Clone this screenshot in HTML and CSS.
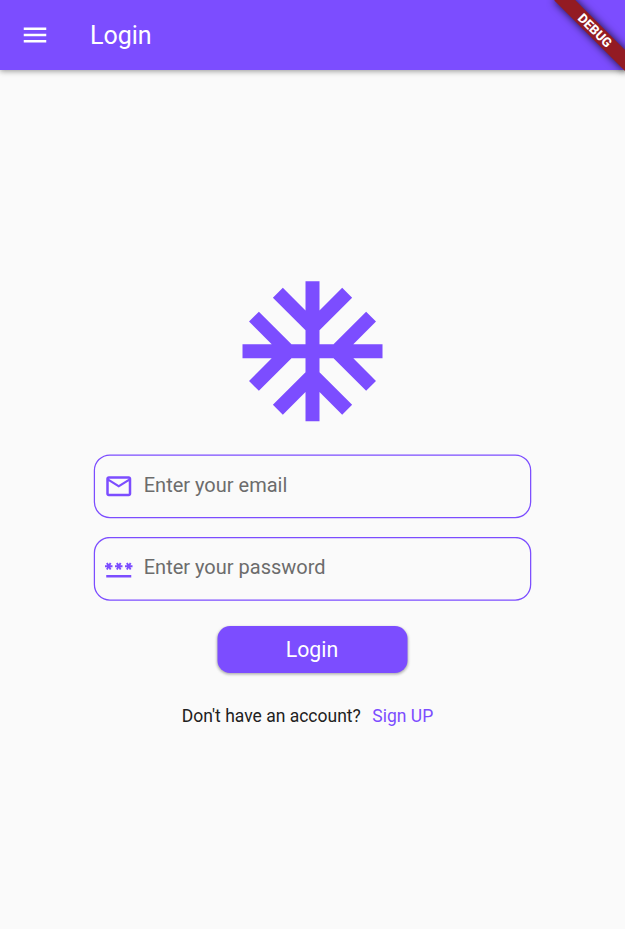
FILE: index.html
```html
<!DOCTYPE html>
<html lang="en">
<head>
  <meta charset="utf-8">
  <title>Login</title>
  <link rel="stylesheet" href="styles.css">
</head>
<body>
  <header class="app-bar">
    <svg class="menu-icon" viewBox="0 0 24 24"><path d="M3 18h18v-2H3v2zm0-5h18v-2H3v2zm0-7v2h18V6H3z"/></svg>
    <h1 class="title">Login</h1>
  </header>
  <div class="banner-clip"><div class="banner">DEBUG</div></div>
  <main class="content">
    <svg class="logo" viewBox="0.07 -0.035 24 24"><path d="M22 11h-4.170l3.240-3.240-1.410-1.420L15 11h-2V9l4.660-4.660-1.420-1.410L13 6.170V2h-2v4.170L7.760 2.930 6.340 4.340 11 9v2H9L4.340 6.340 2.930 7.760 6.170 11H2v2h4.170l-3.240 3.240 1.410 1.420L9 13h2v2l-4.660 4.660 1.420 1.410L11 17.830V22h2v-4.170l3.240 3.240 1.420-1.410L13 15v-2h2l4.660 4.660 1.410-1.420L17.830 13H22z"/></svg>
    <div class="field">
      <svg class="outline"><rect x="1.4" y="1" width="436.25" height="62.5" rx="15.5"/></svg>
      <svg class="field-icon" viewBox="0.2 0.6 24 24"><path d="M22 6c0-1.100-.9-2-2-2H4c-1.100 0-2 .9-2 2v12c0 1.100.9 2 2 2h16c1.100 0 2-.9 2-2V6zm-2 0l-8 5-8-5h16zm0 12H4V8l8 5 8-5v10z"/></svg>
      <span class="hint">Enter your email</span>
    </div>
    <div class="field">
      <svg class="outline"><rect x="1.4" y="0.5" width="436.25" height="62.5" rx="15.5"/></svg>
      <svg class="field-icon" viewBox="0.2 0.2 24 24"><path d="M2 17h20v2H2v-2zm1.150-4.050L4 11.470l.85 1.480 1.300-.75-.85-1.480H7v-1.500H5.300l.85-1.470L4.850 7 4 8.470 3.150 7l-1.300.75.85 1.470H1v1.500h1.700l-.85 1.480 1.300.75zm6.700-.75l1.300.75.85-1.480.85 1.480 1.300-.75-.85-1.480H15v-1.500h-1.700l.85-1.470-1.300-.75L12 8.470 11.150 7l-1.300.75.85 1.470H9v1.500h1.700l-.85 1.480zM23 9.220h-1.700l.85-1.470-1.300-.75L20 8.470 19.150 7l-1.300.75.85 1.470H17v1.500h1.700l-.85 1.480 1.300.75.85-1.480.85 1.480 1.300-.75-.85-1.480H23v-1.500z"/></svg>
      <span class="hint">Enter your password</span>
    </div>
    <button class="submit">Login</button>
    <p class="signup"><span>Don't have an account?</span><a class="link">Sign UP</a></p>
  </main>
</body>
</html>
```

FILE: styles.css
```css
* { box-sizing: border-box; }
body {
  margin: 0;
  height: 929px;
  overflow: hidden;
  position: relative;
  background: #fafafa;
  font-family: Roboto, sans-serif;
}
svg { display: block; flex: none; }
.app-bar {
  display: flex;
  align-items: center;
  height: 70px;
  padding-left: 20px;
  background: #7c4dff;
  color: #fff;
  box-shadow: 0 1px 5px rgba(0,0,0,.32), 0 3px 6px rgba(0,0,0,.08);
}
.menu-icon { width: 30px; height: 30px; fill: #fff; }
.title { margin: 2px 0 0 40px; font-size: 25px; font-weight: 400; line-height: 30px; }
.banner-clip { position: absolute; top: 0; right: 0; width: 120px; height: 120px; overflow: hidden; }
.banner {
  position: absolute;
  left: 40px;
  top: 22.500px;
  width: 100px;
  height: 15px;
  transform: rotate(45deg);
  background: #931b23;
  box-shadow: 0 0 8px rgba(0,0,0,.8);
  color: #fff;
  font-size: 13px;
  font-weight: 800;
  line-height: 15px;
  text-align: center;
}
.content { display: flex; flex-direction: column; align-items: center; padding-top: 197.250px; }
.logo { width: 168px; height: 168px; fill: #7c4dff; }
.field {
  position: relative;
  display: flex;
  align-items: center;
  width: 437.500px;
  height: 62.500px;
  margin-top: 20px;
  padding-left: 10px;
}
.outline { position: absolute; left: -0.400px; top: -1px; width: 439px; height: 65px; fill: none; stroke: #7c4dff; stroke-width: 1.250; }
.field-icon { width: 30px; height: 30px; fill: #7c4dff; }
.hint { margin: -4px 0 0 10px; color: #6c6c6c; font-size: 20px; line-height: 24px; }
.submit {
  width: 190px;
  height: 47.500px;
  margin: 25.500px 0 0;
  padding: 0;
  border: 0;
  border-radius: 12.500px;
  background: #7c4dff;
  color: #fff;
  font: 400 21.250px/47px Roboto, sans-serif;
  box-shadow: 0 1px 3px rgba(0,0,0,.25), 0 2px 3px rgba(0,0,0,.1);
  transform: translateX(-0.5px);
}
.signup { display: flex; gap: 11.500px; margin: 33px 10px 0 0; color: #212121; font-size: 17.500px; line-height: 21px; }
.link { color: #7c4dff; }
```
